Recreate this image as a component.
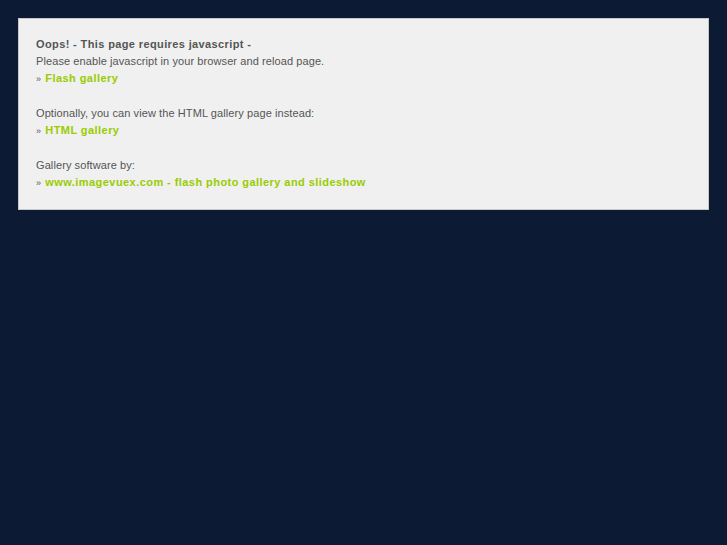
export default function App() {
  const green = "font-bold tracking-[0.44px] text-[#99cc00]";
  const bullet = <span className="text-[9px] leading-none mr-[1px]">»</span>;
  return (
    <div className="min-h-[545px] bg-[#0c1b33] pt-[18px] px-[18px]" style={{ fontFamily: '"Liberation Sans", Arial, sans-serif' }}>
      <div className="w-[691px] border border-[#c8c8c8] bg-[#f0f0f0] pt-[17px] pb-[18px] pl-[17px] text-[11px] leading-[17px] tracking-[0.09px] text-[#555555]">
        <div className="font-bold tracking-[0.38px]">Oops! - This page requires javascript -</div>
        <div>Please enable javascript in your browser and reload page.</div>
        <div>{bullet} <span className={green}>Flash gallery</span></div>
        <div className="h-[18px]" />
        <div>Optionally, you can view the HTML gallery page instead:</div>
        <div>{bullet} <span className={green}>HTML gallery</span></div>
        <div className="h-[18px]" />
        <div>Gallery software by:</div>
        <div>{bullet} <span className={green}>www.imagevuex.com - flash photo gallery and slideshow</span></div>
      </div>
    </div>
  );
}
